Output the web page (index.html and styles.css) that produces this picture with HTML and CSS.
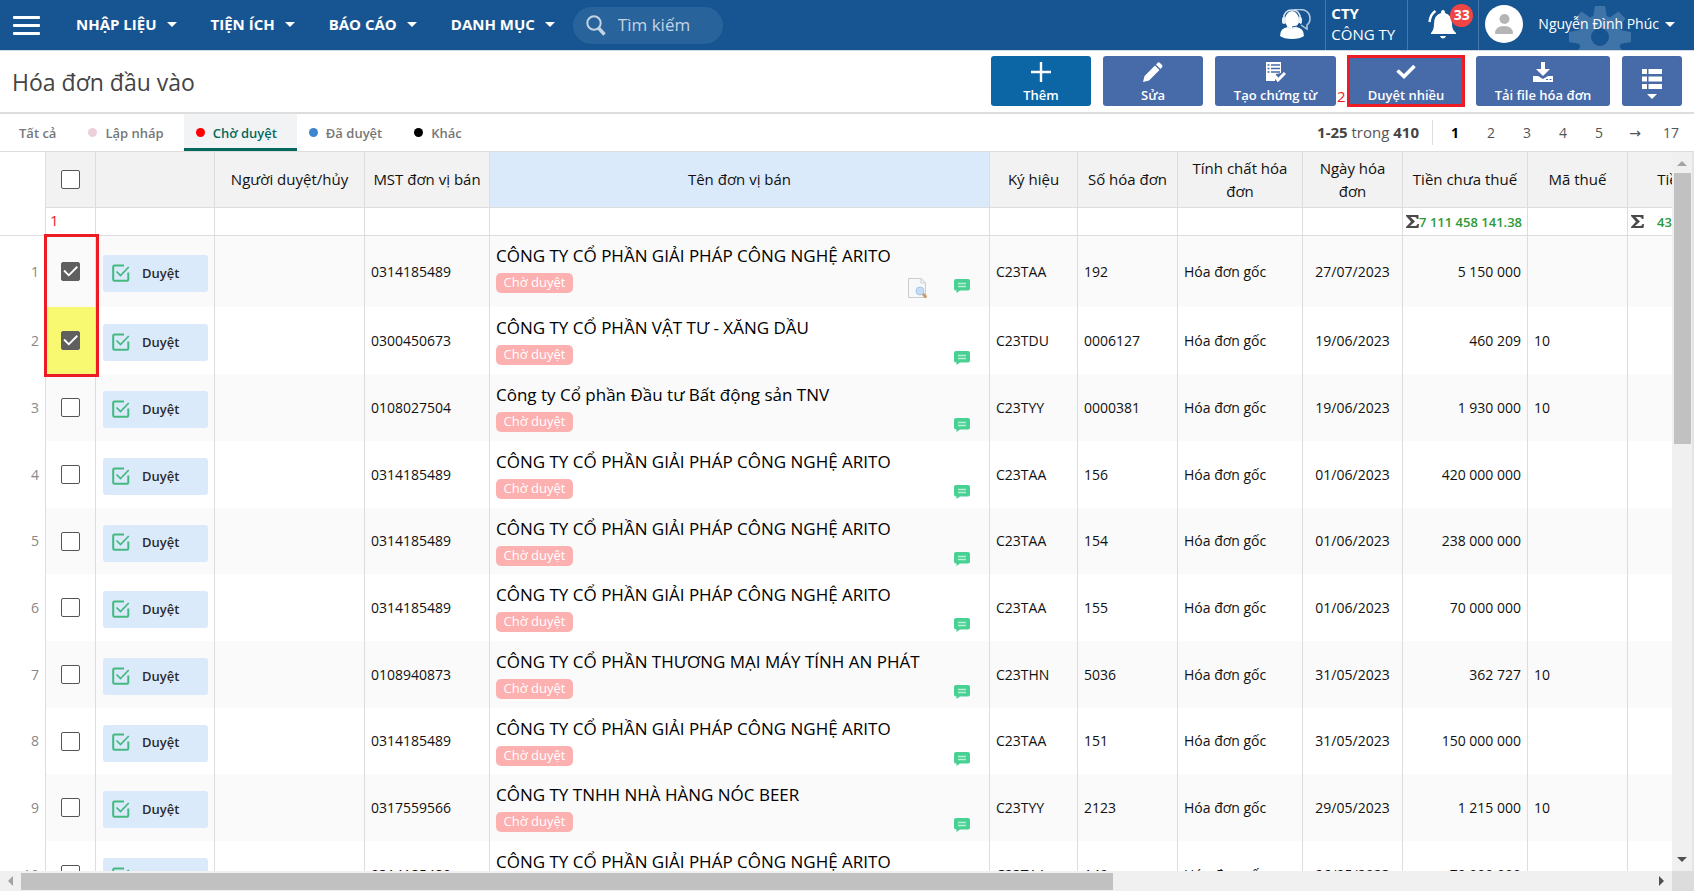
FILE: index.html
```html
<!DOCTYPE html>
<html lang="vi">
<head>
<meta charset="utf-8">
<title>Hóa đơn đầu vào</title>
<link rel="stylesheet" href="styles.css">
</head>
<body>
<svg class="sprite" aria-hidden="true">
  <symbol id="approve" viewBox="0 0 18 18"><path d="M12 1.500H2.500Q1.200 1.500 1.200 2.800V15.500Q1.200 16.800 2.500 16.800H15Q16.300 16.800 16.300 15.500V8.500" fill="none" stroke="#43b97f" stroke-width="2"/><path d="M4.500 7.500 8.500 11.500 16.800 3" fill="none" stroke="#43b97f" stroke-width="1.700"/></symbol>
  <symbol id="comment" viewBox="0 0 16 14"><path d="M2 0H14Q16 0 16 2V9.500Q16 11.500 14 11.500H6L2.500 14V11.500H2Q0 11.500 0 9.500V2Q0 0 2 0Z" fill="#48d193"/><path d="M4 4.500H12M4 7.500H12" stroke="#b8f0d5" stroke-width="1.500"/></symbol>
</svg>

<header class="topbar">
  <button class="menu-btn" aria-label="Menu"><span></span><span></span><span></span></button>
  <nav class="main-nav">
    <button>NHẬP LIỆU<i class="caret"></i></button>
    <button>TIỆN ÍCH<i class="caret"></i></button>
    <button>BÁO CÁO<i class="caret"></i></button>
    <button>DANH MỤC<i class="caret"></i></button>
  </nav>
  <label class="search">
    <svg width="20" height="21" viewBox="0 0 20 21"><circle cx="8" cy="8" r="6.700" fill="none" stroke="#c3d4e5" stroke-width="2"/><path d="M12.500 13 18.500 19.500" stroke="#c3d4e5" stroke-width="3.400"/></svg>
    <input type="text" placeholder="Tìm kiếm" aria-label="Tìm kiếm">
  </label>
  <div class="top-right">
    <button class="support" aria-label="Hỗ trợ">
      <svg width="31" height="31" viewBox="0 0 31 31"><path d="M14 1Q19 0 24 1Q30 3 30 10Q30 14 27 16V20L21 16" fill="none" stroke="#b5cbe0" stroke-width="1.500"/><ellipse cx="12" cy="11" rx="7" ry="9" fill="#fff"/><path d="M3.500 10Q4 1 12 1Q20 1 20.500 10" fill="none" stroke="#dce7f1" stroke-width="1.500"/><rect x="2" y="8" width="4" height="7" rx="2" fill="#e7eff6"/><rect x="18" y="8" width="4" height="7" rx="2" fill="#e7eff6"/><path d="M20 14Q18 18 12 18" fill="none" stroke="#175592" stroke-width="1"/><path d="M0 27Q0 19 8 18Q12 21 16 18Q24 19 24 27Q20 30 12 30Q4 30 0 27Z" fill="#fff"/></svg>
    </button>
    <div class="company"><strong>CTY</strong><span>CÔNG TY</span></div>
    <button class="bell" aria-label="Thông báo">
      <svg width="29" height="30" viewBox="0 0 29 30"><path d="M15 1Q17 1 17 4Q24 6 24 15Q24 21 28 24V25H3V24Q6 21 6 15Q6 6 13 4Q13 1 15 1Z" fill="#fff"/><path d="M12 27H18Q17 29.500 15 29.500Q13 29.500 12 27Z" fill="#fff"/><path d="M7.500 2Q2.500 5 1.500 13" fill="none" stroke="#fff" stroke-width="2.400"/></svg>
      <span class="count">33</span>
    </button>
    <button class="user">
      <svg class="gear" width="64" height="64" viewBox="-32 -32 64 64" aria-hidden="true"><g fill="#3f74a8"><path fill-rule="evenodd" d="M-22 0A22 22 0 1 0 22 0A22 22 0 1 0-22 0ZM-9 0A9 9 0 1 1 9 0A9 9 0 1 1-9 0Z"/><g id="teeth"><path d="M-7-20-5-31H5L7-20ZM-7 20-5 31H5L7 20Z"/></g><use href="#teeth" transform="rotate(45)"/><use href="#teeth" transform="rotate(90)"/><use href="#teeth" transform="rotate(135)"/></g></svg>
      <svg class="avatar" width="38" height="38" viewBox="0 0 38 38"><circle cx="19" cy="19" r="19" fill="#fff"/><circle cx="19.500" cy="14" r="5" fill="#b5b5b5"/><path d="M10 29Q10 21 19 21Q28 21 28 29Z" fill="#b5b5b5"/></svg>
      <span class="user-name">Nguyễn Đình Phúc</span><i class="caret"></i>
    </button>
  </div>
</header>

<section class="titlebar">
  <h1>Hóa đơn đầu vào</h1>
  <div class="actions">
    <button class="action primary"><svg width="20" height="20" viewBox="0 0 20 20"><path d="M10 0V20M0 10H20" stroke="#fff" stroke-width="2.400"/></svg>Thêm</button>
    <button class="action"><svg width="20" height="20" viewBox="0 0 20 20" fill="#fff"><path d="M0 20 1.500 14 12 3.500 16.500 8 6 18.500ZM13 2.500 15 .5Q16 0 17 1L19.200 3.200Q20 4 19.200 5L17.500 7Z"/></svg>Sửa</button>
    <button class="action voucher"><svg width="20" height="20" viewBox="0 0 20 20"><path d="M0 0H15V11L10 12 9 19H0Z" fill="#fff"/><path d="M1.500 3H3.500M5 3H14M1.500 6.500H3.500M5 6.500H14M1.500 10H3.500M5 10H14" stroke="#476aa8" stroke-width="1.500"/><path d="M9 14 12 18 19 11" fill="none" stroke="#fff" stroke-width="3"/></svg>Tạo chứng từ</button>
    <button class="action bulk"><span class="step-two">2</span><svg width="20" height="20" viewBox="0 0 20 20"><path d="M1.500 8.500 8 14.500 18.500 4" fill="none" stroke="#fff" stroke-width="3.600"/></svg>Duyệt nhiều</button>
    <button class="action download"><svg width="20" height="20" viewBox="0 0 20 20" fill="#fff"><path d="M8 0H12V7H17L10 14 3 7H8ZM0 14H5L10 17 15 14H20V20H0Z"/><path d="M13 17.500H15M16.500 17.500H18.500" stroke="#476aa8"/></svg>Tải file hóa đơn</button>
    <button class="action views" aria-label="Chế độ xem"><svg width="20" height="20" viewBox="0 0 20 20"><path d="M0 2.500H5M6.500 2.500H20M0 10H5M6.500 10H20M0 17.500H5M6.500 17.500H20" stroke="#fff" stroke-width="5"/></svg><i class="caret"></i></button>
  </div>
</section>

<section class="filterbar">
  <nav class="tabs">
    <button>Tất cả</button>
    <button><i class="dot draft"></i>Lập nháp</button>
    <button class="active"><i class="dot pending"></i>Chờ duyệt</button>
    <button><i class="dot approved"></i>Đã duyệt</button>
    <button><i class="dot other"></i>Khác</button>
  </nav>
  <div class="pager">
    <p class="range"><b>1-25</b> trong <b>410</b></p>
    <button class="current">1</button><button>2</button><button>3</button><button>4</button><button>5</button><button class="next">→</button><button>17</button>
  </div>
</section>

<main class="grid">
  <div class="viewport">
    <table>
      <colgroup><col class="w-no"><col class="w-check"><col class="w-act"><col class="w-approver"><col class="w-125"><col class="w-name"><col class="w-sign"><col class="w-100"><col class="w-125"><col class="w-100"><col class="w-125"><col class="w-100"><col class="w-125"></colgroup>
      <thead>
        <tr class="heads"><td class="no"></td><th><input type="checkbox" aria-label="Chọn tất cả"></th><th></th><th>Người duyệt/hủy</th><th>MST đơn vị bán</th><th class="sorted">Tên đơn vị bán</th><th>Ký hiệu</th><th>Số hóa đơn</th><th>Tính chất hóa đơn</th><th>Ngày hóa đơn</th><th>Tiền chưa thuế</th><th>Mã thuế</th><th>Tiền thuế</th></tr>
        <tr class="sums"><td class="no"></td><td class="step-one">1</td><td></td><td></td><td></td><td></td><td></td><td></td><td></td><td></td><td><div class="sum"><svg width="13" height="13" viewBox="0 0 13 13"><path d="M0 0H12.500V4H11Q10.500 2 8.500 2H4.500L9 6.500 4 11H9Q11 11 11.500 9H13L12.500 13H0V12L5 6.800 0 1Z" fill="#4a4a4a"/></svg><b>7 111 458 141.38</b></div></td><td></td><td><div class="sum tax"><svg width="13" height="13" viewBox="0 0 13 13"><path d="M0 0H12.500V4H11Q10.500 2 8.500 2H4.500L9 6.500 4 11H9Q11 11 11.500 9H13L12.500 13H0V12L5 6.800 0 1Z" fill="#4a4a4a"/></svg><b>43</b></div></td></tr>
      </thead>
      <tbody>
        <tr class="tall"><td class="no">1</td><td class="check"><span class="frame"></span><input type="checkbox" checked aria-label="Chọn dòng 1"></td><td><button class="approve"><svg><use href="#approve"/></svg>Duyệt</button></td><td></td><td>0314185489</td><td class="name"><p>CÔNG TY CỔ PHẦN GIẢI PHÁP CÔNG NGHỆ ARITO</p><div class="meta"><span class="status">Chờ duyệt</span><svg class="doc" viewBox="0 0 19 20"><path d="M.5.5H13L17.500 5V19.500H.5Z" fill="#f7f8fa" stroke="#ccc"/><path d="M13 .5V5H17.500Z" fill="#fff" stroke="#ccc"/><circle cx="12" cy="13" r="4" fill="#c3ddf8" stroke="#a7c6e8"/><path d="M15 16 18.500 19.500" stroke="#c79b6a" stroke-width="3"/></svg><svg class="comment"><use href="#comment"/></svg></div></td><td>C23TAA</td><td>192</td><td>Hóa đơn gốc</td><td class="date">27/07/2023</td><td class="num">5 150 000</td><td></td><td></td></tr>
        <tr class="picked"><td class="no">2</td><td class="check"><input type="checkbox" checked aria-label="Chọn dòng 2"></td><td><button class="approve"><svg><use href="#approve"/></svg>Duyệt</button></td><td></td><td>0300450673</td><td class="name"><p>CÔNG TY CỔ PHẦN VẬT TƯ - XĂNG DẦU</p><div class="meta"><span class="status">Chờ duyệt</span><svg class="comment"><use href="#comment"/></svg></div></td><td>C23TDU</td><td>0006127</td><td>Hóa đơn gốc</td><td class="date">19/06/2023</td><td class="num">460 209</td><td>10</td><td></td></tr>
        <tr><td class="no">3</td><td class="check"><input type="checkbox" aria-label="Chọn dòng 3"></td><td><button class="approve"><svg><use href="#approve"/></svg>Duyệt</button></td><td></td><td>0108027504</td><td class="name"><p>Công ty Cổ phần Đầu tư Bất động sản TNV</p><div class="meta"><span class="status">Chờ duyệt</span><svg class="comment"><use href="#comment"/></svg></div></td><td>C23TYY</td><td>0000381</td><td>Hóa đơn gốc</td><td class="date">19/06/2023</td><td class="num">1 930 000</td><td>10</td><td></td></tr>
        <tr><td class="no">4</td><td class="check"><input type="checkbox" aria-label="Chọn dòng 4"></td><td><button class="approve"><svg><use href="#approve"/></svg>Duyệt</button></td><td></td><td>0314185489</td><td class="name"><p>CÔNG TY CỔ PHẦN GIẢI PHÁP CÔNG NGHỆ ARITO</p><div class="meta"><span class="status">Chờ duyệt</span><svg class="comment"><use href="#comment"/></svg></div></td><td>C23TAA</td><td>156</td><td>Hóa đơn gốc</td><td class="date">01/06/2023</td><td class="num">420 000 000</td><td></td><td></td></tr>
        <tr class="short"><td class="no">5</td><td class="check"><input type="checkbox" aria-label="Chọn dòng 5"></td><td><button class="approve"><svg><use href="#approve"/></svg>Duyệt</button></td><td></td><td>0314185489</td><td class="name"><p>CÔNG TY CỔ PHẦN GIẢI PHÁP CÔNG NGHỆ ARITO</p><div class="meta"><span class="status">Chờ duyệt</span><svg class="comment"><use href="#comment"/></svg></div></td><td>C23TAA</td><td>154</td><td>Hóa đơn gốc</td><td class="date">01/06/2023</td><td class="num">238 000 000</td><td></td><td></td></tr>
        <tr><td class="no">6</td><td class="check"><input type="checkbox" aria-label="Chọn dòng 6"></td><td><button class="approve"><svg><use href="#approve"/></svg>Duyệt</button></td><td></td><td>0314185489</td><td class="name"><p>CÔNG TY CỔ PHẦN GIẢI PHÁP CÔNG NGHỆ ARITO</p><div class="meta"><span class="status">Chờ duyệt</span><svg class="comment"><use href="#comment"/></svg></div></td><td>C23TAA</td><td>155</td><td>Hóa đơn gốc</td><td class="date">01/06/2023</td><td class="num">70 000 000</td><td></td><td></td></tr>
        <tr><td class="no">7</td><td class="check"><input type="checkbox" aria-label="Chọn dòng 7"></td><td><button class="approve"><svg><use href="#approve"/></svg>Duyệt</button></td><td></td><td>0108940873</td><td class="name"><p>CÔNG TY CỔ PHẦN THƯƠNG MẠI MÁY TÍNH AN PHÁT</p><div class="meta"><span class="status">Chờ duyệt</span><svg class="comment"><use href="#comment"/></svg></div></td><td>C23THN</td><td>5036</td><td>Hóa đơn gốc</td><td class="date">31/05/2023</td><td class="num">362 727</td><td>10</td><td></td></tr>
        <tr class="short"><td class="no">8</td><td class="check"><input type="checkbox" aria-label="Chọn dòng 8"></td><td><button class="approve"><svg><use href="#approve"/></svg>Duyệt</button></td><td></td><td>0314185489</td><td class="name"><p>CÔNG TY CỔ PHẦN GIẢI PHÁP CÔNG NGHỆ ARITO</p><div class="meta"><span class="status">Chờ duyệt</span><svg class="comment"><use href="#comment"/></svg></div></td><td>C23TAA</td><td>151</td><td>Hóa đơn gốc</td><td class="date">31/05/2023</td><td class="num">150 000 000</td><td></td><td></td></tr>
        <tr><td class="no">9</td><td class="check"><input type="checkbox" aria-label="Chọn dòng 9"></td><td><button class="approve"><svg><use href="#approve"/></svg>Duyệt</button></td><td></td><td>0317559566</td><td class="name"><p>CÔNG TY TNHH NHÀ HÀNG NÓC BEER</p><div class="meta"><span class="status">Chờ duyệt</span><svg class="comment"><use href="#comment"/></svg></div></td><td>C23TYY</td><td>2123</td><td>Hóa đơn gốc</td><td class="date">29/05/2023</td><td class="num">1 215 000</td><td>10</td><td></td></tr>
        <tr><td class="no">10</td><td class="check"><input type="checkbox" aria-label="Chọn dòng 10"></td><td><button class="approve"><svg><use href="#approve"/></svg>Duyệt</button></td><td></td><td>0314185489</td><td class="name"><p>CÔNG TY CỔ PHẦN GIẢI PHÁP CÔNG NGHỆ ARITO</p><div class="meta"><span class="status">Chờ duyệt</span><svg class="comment"><use href="#comment"/></svg></div></td><td>C23TAA</td><td>149</td><td>Hóa đơn gốc</td><td class="date">26/05/2023</td><td class="num">70 000 000</td><td></td><td></td></tr>
      </tbody>
    </table>
  </div>
  <div class="vbar"><i class="arrow up"></i><div class="vtrack"><div class="vthumb"></div></div><i class="arrow down"></i></div>
  <div class="hbar"><i class="arrow left"></i><div class="htrack"><div class="hthumb"></div></div><i class="arrow right"></i></div>
  <div class="corner"></div>
</main>
</body>
</html>
```
FILE: styles.css
```css
* { box-sizing: border-box; }
body {
  margin: 0;
  height: 100vh;
  overflow: hidden;
  display: flex;
  flex-direction: column;
  background: #fff;
  color: #111;
  font: 14px/22px "Open Sans", "Noto Sans", sans-serif;
}
h1, p { margin: 0; }
button {
  margin: 0;
  padding: 0;
  border: 0;
  background: none;
  color: inherit;
  font: inherit;
  cursor: pointer;
}
svg { flex: none; display: block; }
.sprite { position: absolute; width: 0; height: 0; }
.caret {
  flex: none;
  border: 5px solid transparent;
  border-top-color: currentColor;
  border-bottom-width: 0;
}

/* Top bar */
.topbar {
  flex: none;
  display: flex;
  align-items: center;
  height: 51px;
  padding-left: 13px;
  border-bottom: 1px solid #d5dbe2;
  background: #175592;
  color: #fff;
}
.menu-btn { display: grid; gap: 5px; width: 27px; margin-right: 36px; }
.menu-btn span { height: 3px; border-radius: 1px; background: #fff; }
.main-nav { display: flex; gap: 34px; padding-bottom: 2px; }
.main-nav button { display: flex; align-items: center; gap: 10px; font-size: 15px; font-weight: 700; }
.search {
  display: flex;
  align-items: center;
  gap: 12px;
  width: 150px;
  height: 37px;
  margin-left: 18px;
  padding: 0 13px;
  border-radius: 19px;
  background: #28639b;
}
.search input {
  width: 100%;
  min-width: 0;
  padding: 0;
  border: 0;
  outline: 0;
  background: none;
  color: #fff;
  font: inherit;
  font-size: 17px;
}
.search input::placeholder { color: #c3d4e5; }
.top-right { display: flex; align-items: stretch; height: 50px; margin-left: auto; }
.support { display: grid; place-items: center; width: 59px; padding-bottom: 2px; }
.company {
  display: flex;
  flex-direction: column;
  justify-content: center;
  width: 83px;
  padding: 0 0 2px 5px;
  border: 1px solid #4577a8;
  border-width: 0 1px;
  font-size: 15px;
  line-height: 21px;
}
.bell { position: relative; width: 71px; padding: 0 20px 3px; border-right: 1px solid #4577a8; }
.count {
  position: absolute;
  top: 4px;
  left: 42px;
  width: 23px;
  height: 23px;
  border-radius: 50%;
  background: #f04545;
  font-weight: 700;
  text-align: center;
}
.user { position: relative; display: flex; align-items: center; padding: 0 19px 2px 6px; overflow: hidden; }
.avatar { position: relative; margin-right: 15px; }
.user-name { position: relative; margin-right: 6px; }
.user .caret { position: relative; }
.gear { position: absolute; top: 5px; right: 62px; }

/* Title and actions */
.titlebar {
  flex: none;
  display: flex;
  align-items: center;
  justify-content: space-between;
  height: 63px;
  padding: 0 12px 1px;
  border-bottom: 2px solid #ddd;
}
h1 { padding-top: 2px; color: #444; font-size: 23px; font-weight: 400; line-height: 30px; }
.actions { display: flex; gap: 12px; }
.action {
  position: relative;
  display: flex;
  flex-direction: column;
  align-items: center;
  justify-content: space-between;
  width: 100px;
  height: 50px;
  padding: 6px 0 2px;
  border-radius: 3px;
  background: #476aa8;
  color: #fff;
  font-size: 13px;
  font-weight: 600;
  line-height: 18px;
}
.primary { background: #0c65a5; }
.voucher { width: 121px; }
.bulk { width: 116px; border-radius: 0; outline: 3px solid #ed1c24; outline-offset: -2px; }
.step-two { position: absolute; top: 31px; left: -11px; color: #ed1c24; font-size: 15px; font-weight: 400; }
.download { width: 134px; }
.views { width: 60px; padding: 13px 0 7px; }

/* Filters and paging */
.filterbar {
  flex: none;
  display: flex;
  justify-content: space-between;
  height: 38px;
  padding: 0 5px 0 7px;
  border-bottom: 1px solid #ddd;
}
.tabs { display: flex; }
.tabs button {
  display: flex;
  align-items: center;
  gap: 8px;
  padding: 3px 20px 0 12px;
  border-bottom: 3px solid transparent;
  color: #777;
  font-size: 13px;
  font-weight: 600;
}
.tabs .active { border-color: #04695c; background: #f2f3f5; color: #04695c; }
.dot { width: 9px; height: 9px; border-radius: 50%; }
.draft { background: #ecd0dc; }
.pending { background: #f00; }
.approved { background: #3d85cc; }
.other { background: #000; }
.pager { display: flex; align-items: center; color: #555; }
.range { margin-right: 4px; padding-right: 13px; border-right: 1px solid #ddd; font-size: 15px; line-height: 25px; }
.range b { color: #444; }
.pager button { width: 36px; }
.pager .current { color: #000; font-weight: 700; }
.pager .next { font-family: "DejaVu Sans", sans-serif; }

/* Invoice grid */
.grid {
  flex: 1;
  min-height: 0;
  display: grid;
  grid-template: minmax(0, 1fr) 20px / minmax(0, 1fr) 22px;
}
.viewport { overflow: hidden; }
table { width: 1753px; table-layout: fixed; border-collapse: separate; border-spacing: 0; }
.w-no { width: 46px; }
.w-check { width: 50px; }
.w-act { width: 119px; }
.w-approver { width: 150px; }
.w-name { width: 500px; }
.w-sign { width: 88px; }
.w-100 { width: 100px; }
.w-125 { width: 125px; }
th, td { padding: 0 6px; border-right: 1px solid #ddd; text-align: left; }
.heads { height: 56px; }
.heads th {
  border-bottom: 1px solid #ddd;
  background: #f2f2f2;
  font-size: 15px;
  font-weight: 400;
  line-height: 23px;
  text-align: center;
}
.heads .sorted { background: #dbeafb; }
.sums { height: 28px; }
.sums td { border-bottom: 1px solid #ddd; }
.sums .step-one { padding: 0 4px 4px; color: #ed1c24; font-size: 15px; }
.sum { display: flex; align-items: center; justify-content: space-between; margin: 0 -1px 0 -3px; }
.sum b { color: #2e9a37; font-size: 13px; font-weight: 600; }
.tax { justify-content: flex-start; gap: 13px; }
tbody tr { height: 67px; }
tbody .tall { height: 71px; }
tbody .short { height: 66px; }
tbody tr:nth-child(odd) { background: #fafafa; }
td.no { background: #fff; color: #888; text-align: right; }
tbody .check { position: relative; }
.check, .heads th:nth-child(2) { padding: 0; text-align: center; }
.picked .check { background: #f8f871; }
.frame { position: absolute; z-index: 1; top: -2px; left: -2px; width: 55px; height: 143px; border: 3px solid #ed1c24; }
input[type="checkbox"] {
  appearance: none;
  display: block;
  width: 19px;
  height: 19px;
  margin: 0 auto;
  border: 1px solid #555;
  border-radius: 2px;
  background: #fff;
}
input[type="checkbox"]:checked { border-color: #5f5f5f; background: #5f5f5f; }
input[type="checkbox"]:checked::before {
  content: "";
  display: block;
  width: 17px;
  height: 17px;
  background: #fff;
  clip-path: polygon(8% 48%, 16% 40%, 40% 64%, 86% 18%, 94% 26%, 40% 80%);
}
.approve {
  display: flex;
  align-items: center;
  gap: 12px;
  width: 105px;
  height: 37px;
  margin: 4px 0 0 1px;
  padding: 0 9px 2px;
  border-radius: 3px;
  background: #dbeafb;
  color: #2b2b2b;
  font-size: 13px;
  font-weight: 600;
}
.approve svg { width: 18px; height: 18px; }
.name { padding: 8px 19px 0 6px; vertical-align: top; }
.tall .name { padding-top: 7px; }
.name p { color: #000; font-size: 17px; font-weight: 500; line-height: 26px; white-space: nowrap; }
.meta { display: flex; align-items: flex-end; gap: 27px; margin-top: 4px; }
.status {
  width: 77px;
  height: 20px;
  margin-right: auto;
  border-radius: 5px;
  background: #fdb0b0;
  color: #fff;
  font-size: 13px;
  line-height: 18px;
  text-align: center;
}
.comment { width: 16px; height: 14px; }
.doc { width: 19px; height: 20px; margin-bottom: -5px; }
.date { padding: 0; text-align: center; }
.num { text-align: right; }

/* Scroll bars */
.vbar, .hbar { display: flex; align-items: center; background: #f0f0f0; }
.vbar { flex-direction: column; padding: 9px 0; border-right: 2px solid #e4e4e4; }
.vtrack { flex: 1; width: 17px; padding: 7px 0; }
.vthumb { height: 40%; background: #c1c1c1; }
.hbar { padding: 0 8px; }
.htrack { flex: 1; height: 17px; padding: 0 8px; }
.hthumb { width: 67%; height: 17px; background: #c1c1c1; }
.corner { background: #dcdcdc; }
.arrow { border: 5px solid transparent; }
.up { border-top-width: 0; border-bottom-color: #a3a3a3; }
.down { border-bottom-width: 0; border-top-color: #505050; }
.left { border-left-width: 0; border-right-color: #a3a3a3; }
.right { border-right-width: 0; border-left-color: #505050; }
```
